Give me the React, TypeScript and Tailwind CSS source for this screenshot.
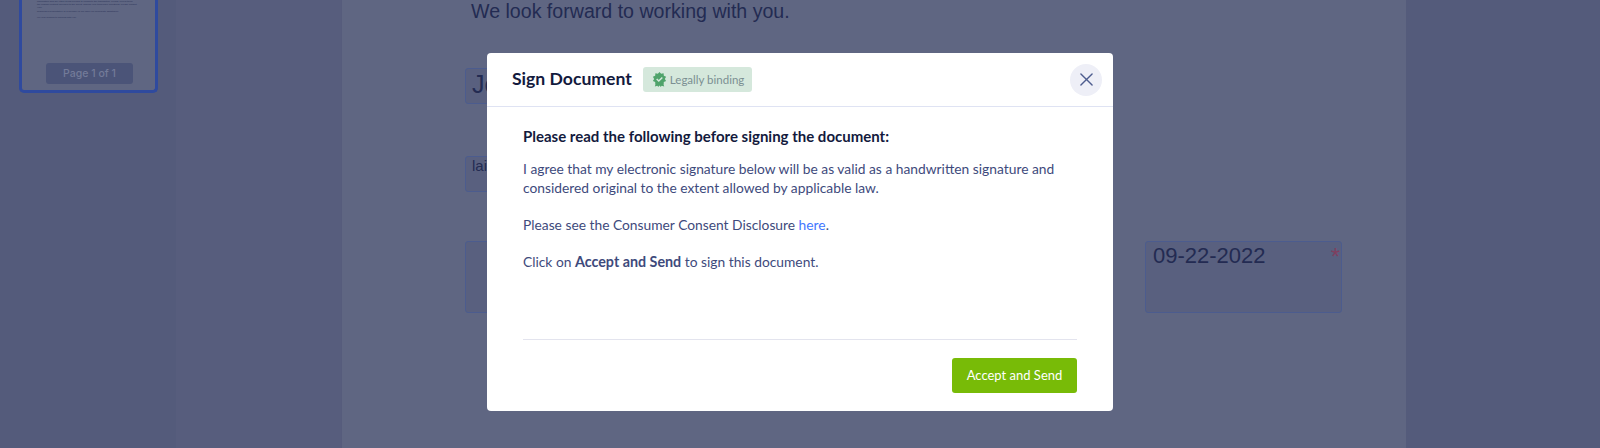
const rosette = Array.from({ length: 20 }, (_, i) => {
  const r = i % 2 === 0 ? 7.4 : 5.7;
  const a = (i / 20) * Math.PI * 2;
  return `${(8 + r * Math.sin(a)).toFixed(2)},${(7.4 - r * Math.cos(a)).toFixed(2)}`;
}).join(" ");

export default function App() {
  const body = "text-[#3e4a7c]";
  return (
    <div className="relative flex h-[448px] w-[1600px] overflow-hidden bg-[#535a7b] font-['Lato',sans-serif]">
      <aside className="w-[176px] shrink-0 bg-[#545b7b] pl-[19px] pr-[18px]">
        <div className="flex h-[93px] flex-col rounded-b-[5px] border-x-[3px] border-b-[3px] border-[#2f4a9e] bg-[#5f6682] px-[15px]">
          <div className="font-['Liberation_Sans',sans-serif] text-[2.45px] leading-[3.2px] text-[#2a3257]">
            <p>information and any other items needed to complete the transaction. Please review them</p>
            <p>the original contract provided to the Client. Should your team have questions, please contact your</p>
            <p>business representative or a member of our office for immediate assistance.</p>
            <p className="mt-[3.6px]">We look forward to working with you.</p>
          </div>
          <div className="mt-auto mb-[6px] ml-[9px] flex h-[21px] w-[87px] items-center justify-center rounded-[3px] bg-[#4b5478] font-['Inter',sans-serif] text-[10.500px] font-medium text-[#737b99]">
            Page 1 of 1
          </div>
        </div>
      </aside>
      <div className="w-[165px] shrink-0 bg-[#575d7d]" />
      <main className="w-[1065px] shrink-0 border-l border-[#565c7c] bg-[#5f6682] pl-[123px] font-['Liberation_Sans',sans-serif]">
        <p className="-mt-[2px] pl-[6px] text-[19.6px] leading-[27px] text-[#232b52]">We look forward to working with you.</p>
        <div className="mt-[43px] h-[36px] w-[200px] rounded-[3px] border border-[#4c5c8e] bg-[#59607f] pl-[6px] text-[25px] leading-[31px] text-[#232b52]">Je</div>
        <div className="mt-[52px] h-[36px] w-[200px] rounded-[3px] border border-[#4c5c8e] bg-[#59607f] pl-[6px] text-[15px] leading-[17px] text-[#232b52]">lai</div>
        <div className="mt-[49px] flex items-start justify-between pr-[64px]">
          <div className="h-[72px] w-[200px] rounded-[3px] border border-[#4c5c8e] bg-[#59607f]" />
          <div className="relative h-[72px] w-[197px] rounded-[3px] border border-[#4c5c8e] bg-[#59607f] pl-[7px] text-[22px] leading-[28px] text-[#232b52]">
            09-22-2022
            <span className="absolute top-[3px] right-[1px] text-[24px] leading-[24px] text-[#7e3f60]">*</span>
          </div>
        </div>
      </main>
      <div className="flex-1 bg-[#545b7b]" />

      <section className="absolute top-[53px] left-[487px] flex h-[358px] w-[626px] flex-col rounded-[4px] bg-white">
        <header className="flex h-[54px] shrink-0 items-center border-b border-[#dfe3f3] pr-[11px] pl-[25px]">
          <h2 className="-mt-[1px] text-[17.600px] font-bold text-[#131a3d]">Sign Document</h2>
          <span className="ml-[11px] flex h-[25px] w-[109px] items-center rounded-[3px] bg-[#d5e8dc] pl-[9px] text-[11.500px] text-[#7b8f92]">
            <svg viewBox="0 0 16 16" className="mr-[3px] h-[15px] w-[15px]">
              <path fill="#4fa36b" d="M4.500 11l-1.500 4.500 2.600-.8L7 16l1-3 1 3 1.400-1.300 2.600.8-1.500-4.500z" />
              <polygon fill="#4fa36b" points={rosette} />
              <path fill="none" stroke="#d5e8dc" strokeWidth="1.600" d="M5 7.400l2.200 2.200 3.800-3.800" />
            </svg>
            Legally binding
          </span>
          <button className="ml-auto flex h-[32px] w-[32px] items-center justify-center rounded-full bg-[#eeeff7]">
            <svg viewBox="0 0 14 14" className="h-[13px] w-[13px]">
              <path stroke="#4e5d8f" strokeWidth="1.500" strokeLinecap="round" d="M1 1l12 12M13 1L1 13" />
            </svg>
          </button>
        </header>
        <div className="flex flex-1 flex-col px-[36px] text-[13.800px] leading-[19px]">
          <h3 className="mt-[20px] text-[15px] font-bold text-[#131a3d]">Please read the following before signing the document:</h3>
          <p className={`mt-[13px] ${body}`}>I agree that my electronic signature below will be as valid as a handwritten signature and<br />considered original to the extent allowed by applicable law.</p>
          <p className={`mt-[18px] ${body}`}>Please see the Consumer Consent Disclosure <a className="text-[#4277ff]">here</a>.</p>
          <p className={`mt-[18px] ${body}`}>Click on <b className="text-[14.300px] font-bold">Accept and Send</b> to sign this document.</p>
          <div className="mt-auto flex h-[72px] items-start justify-end border-t border-[#e3e4ee] pt-[18px]">
            <button className="h-[35px] w-[125px] rounded-[3px] bg-[#78bb07] text-[13px] text-white">Accept and Send</button>
          </div>
        </div>
      </section>
    </div>
  );
}
